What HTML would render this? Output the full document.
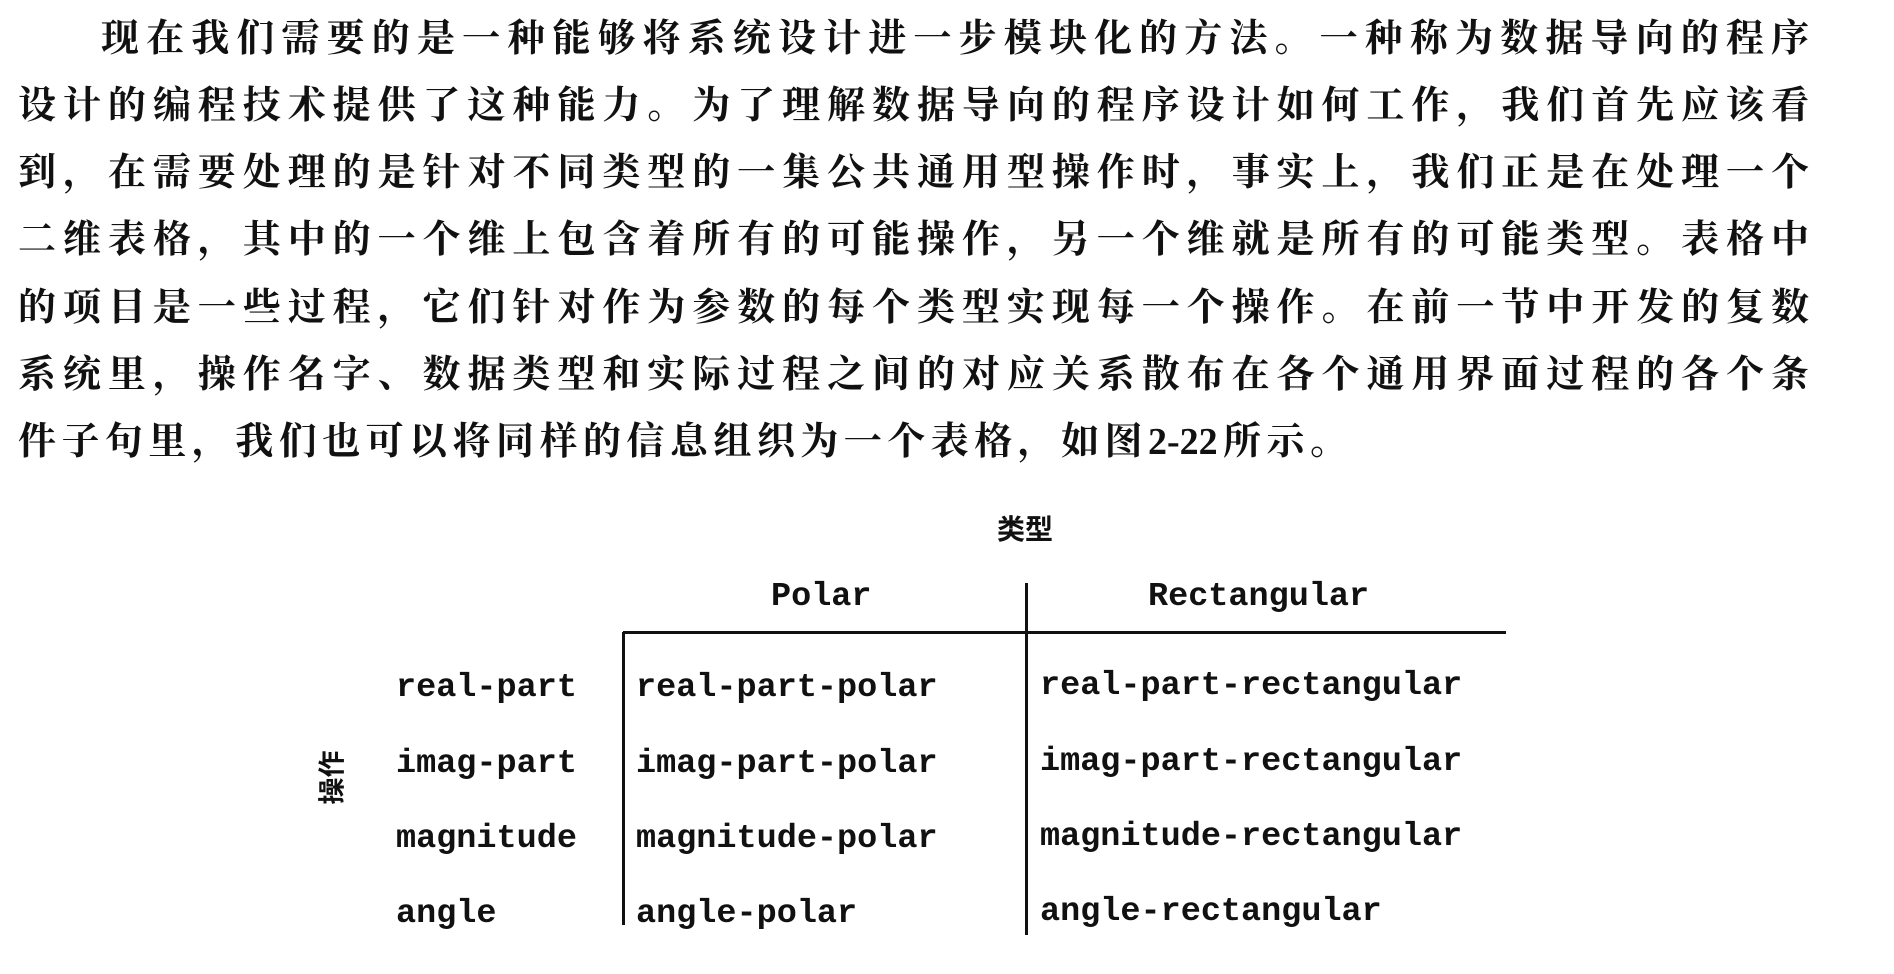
<!DOCTYPE html>
<html><head><meta charset="utf-8"><style>
html,body{margin:0;padding:0;background:#fff;}
body{width:1894px;height:974px;position:relative;overflow:hidden;color:#111;}
.ln{position:absolute;left:18px;width:1791px;font-family:"Liberation Serif","Noto Serif CJK SC","Noto Sans CJK SC",serif;font-size:38px;line-height:44px;text-align:justify;text-align-last:justify;white-space:nowrap;font-weight:bold;}
.t{position:absolute;font-family:"Liberation Mono",monospace;font-weight:bold;font-size:33.5px;line-height:40px;white-space:nowrap;}
.cj{position:absolute;font-family:"Noto Sans CJK SC",sans-serif;font-weight:bold;font-size:28px;}
.v{position:absolute;background:#111;}
</style></head><body>
<div class="ln" style="top:17px;left:101px;width:1708px">现在我们需要的是一种能够将系统设计进一步模块化的方法。一种称为数据导向的程序</div>
<div class="ln" style="top:84px">设计的编程技术提供了这种能力。为了理解数据导向的程序设计如何工作，我们首先应该看</div>
<div class="ln" style="top:151px">到，在需要处理的是针对不同类型的一集公共通用型操作时，事实上，我们正是在处理一个</div>
<div class="ln" style="top:218px">二维表格，其中的一个维上包含着所有的可能操作，另一个维就是所有的可能类型。表格中</div>
<div class="ln" style="top:286px">的项目是一些过程，它们针对作为参数的每个类型实现每一个操作。在前一节中开发的复数</div>
<div class="ln" style="top:353px">系统里，操作名字、数据类型和实际过程之间的对应关系散布在各个通用界面过程的各个条</div>
<div class="ln" style="top:420px;width:1330px">件子句里，我们也可以将同样的信息组织为一个表格，如图2-22所示。</div>

<div class="cj" style="left:997px;top:508px">类型</div>
<div class="t" style="left:771px;top:577px">Polar</div>
<div class="t" style="left:1148px;top:577px">Rectangular</div>
<div class="v" style="left:1025px;top:583px;width:3px;height:352px"></div>
<div class="v" style="left:623px;top:631px;width:883px;height:3px"></div>
<div class="v" style="left:622px;top:632px;width:3px;height:293px"></div>

<div class="cj" style="left:303px;top:758px;transform:rotate(-90deg);font-size:27px">操作</div>

<div class="t" style="left:396px;top:668px">real-part</div>
<div class="t" style="left:396px;top:744px">imag-part</div>
<div class="t" style="left:396px;top:819px">magnitude</div>
<div class="t" style="left:396px;top:894px">angle</div>

<div class="t" style="left:636px;top:668px">real-part-polar</div>
<div class="t" style="left:636px;top:744px">imag-part-polar</div>
<div class="t" style="left:636px;top:819px">magnitude-polar</div>
<div class="t" style="left:636px;top:894px">angle-polar</div>

<div class="t" style="left:1040px;top:666px">real-part-rectangular</div>
<div class="t" style="left:1040px;top:742px">imag-part-rectangular</div>
<div class="t" style="left:1040px;top:817px">magnitude-rectangular</div>
<div class="t" style="left:1040px;top:892px">angle-rectangular</div>
</body></html>
